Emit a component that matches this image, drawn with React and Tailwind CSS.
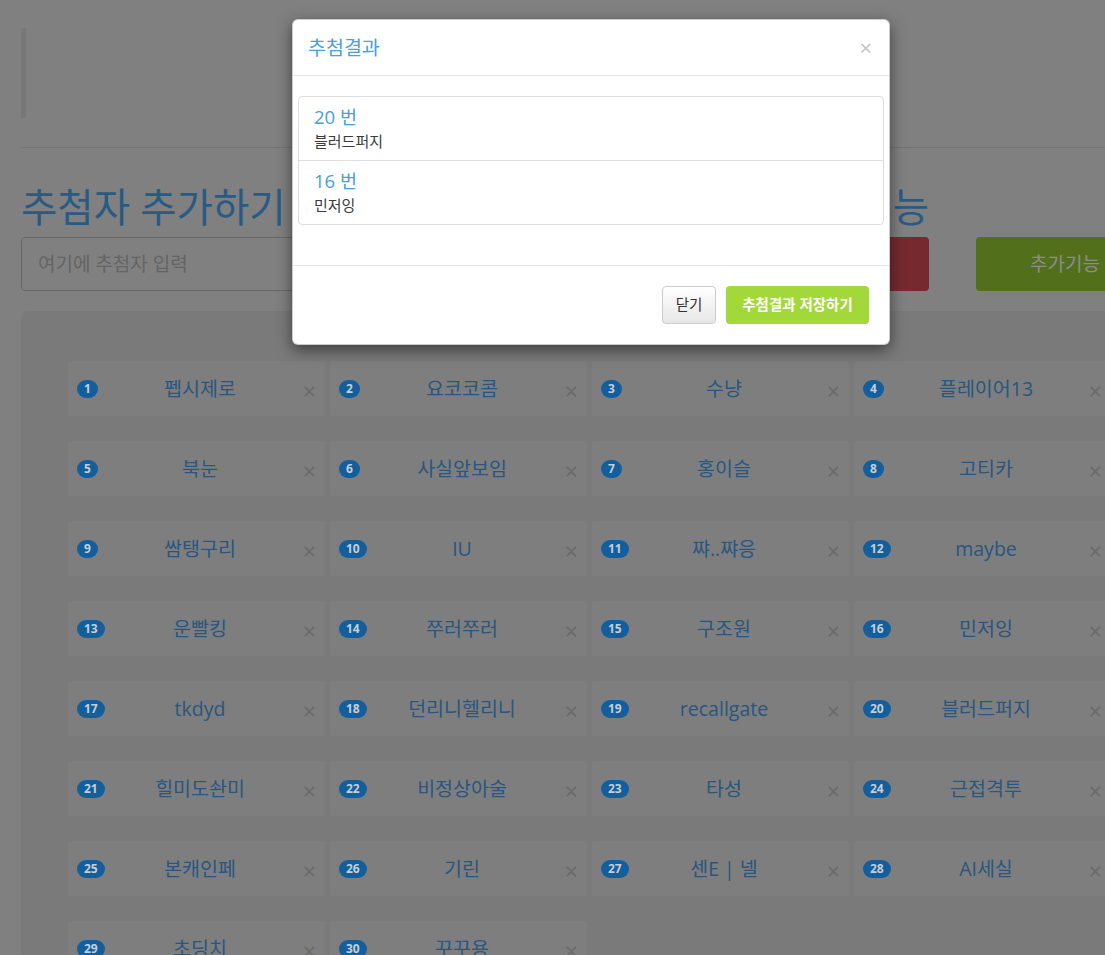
import React from 'react';

const members = [
  '펩시제로', '요코코콤', '수냥', '플레이어13',
  '북눈', '사실앞보임', '홍이슬', '고티카',
  '쌈탱구리', 'IU', '쨔..쨔응', 'maybe',
  '운빨킹', '쭈러쭈러', '구조원', '민저잉',
  'tkdyd', '던리니헬리니', 'recallgate', '블러드퍼지',
  '힐미도솬미', '비정상아술', '타성', '근접격투',
  '본캐인페', '기린', '센E | 넬', 'AI세실',
  '초딩치', '꾸꾸용',
];

const winners = [
  { no: 20, name: '블러드퍼지' },
  { no: 16, name: '민저잉' },
];

function MemberCard({ no, name }) {
  return (
    <div className="h-[57px] grid grid-cols-[1fr_auto_1fr] items-center px-[9px] bg-[#7e7e7e] border border-[#7a7a7a] rounded-[3px]">
      <span className="justify-self-start h-[18px] px-[7px] rounded-full bg-[#135e9d] text-[#c6ced6] text-[12px] font-bold leading-[18px]">
        {no}
      </span>
      <span className="pl-[7px] text-[19.5px] text-[#285680] leading-[26px] whitespace-nowrap">{name}</span>
      <span className="justify-self-end mr-0 mt-[6px] text-[23px] leading-none text-[#6a6a6a]">×</span>
    </div>
  );
}

function ResultModal() {
  return (
    <div className="absolute left-[292px] top-[19px] w-[598px] bg-white rounded-[6px] shadow-[0_5px_15px_rgba(0,0,0,0.5)] border border-black/20">
      <div className="h-[56px] flex items-center justify-between px-[15px] border-b border-[#e5e5e5]">
        <h4 className="text-[19.5px] text-[#48a0dc] leading-[26px]">추첨결과</h4>
        <button className="text-[22px] leading-none text-[#c4c4c4] -mt-[2px] mr-[2px]">×</button>
      </div>
      <div className="pt-[20px] pb-[40px] px-[5px]">
        <div className="border border-[#dddddd] rounded-[4px]">
          {winners.map((w, i) => (
            <div key={w.no} className={'px-[15px] pt-[10px] pb-[10px] ' + (i > 0 ? 'border-t border-[#dddddd]' : '')}>
              <h4 className="text-[18.5px] leading-[20px] text-[#48a0dc] mb-[5px]">{w.no} 번</h4>
              <p className="text-[15px] leading-[18px] text-[#3a3a3a]">{w.name}</p>
            </div>
          ))}
        </div>
      </div>
      <div className="border-t border-[#e5e5e5] px-[20px] py-[20px] flex justify-end gap-[10px]">
        <button className="h-[38px] w-[54px] rounded-[4px] border border-[#cccccc] bg-gradient-to-b from-white to-[#e6e6e6] text-[14.5px] text-[#333]">
          닫기
        </button>
        <button className="h-[38px] w-[143px] rounded-[4px] bg-[#a3d83a] text-[14.5px] font-bold text-white">
          추첨결과 저장하기
        </button>
      </div>
    </div>
  );
}

export default function App() {
  return (
    <div className="relative w-full h-[955px] overflow-hidden bg-[#808080] font-['Open_Sans','Noto_Sans_CJK_KR',sans-serif]">
      <div className="w-[1180px] pl-[21px] pt-[28px]">
        <div className="h-[90px] border-l-[5px] border-[#787878]"></div>
        <hr className="mt-[29px] border-0 border-t border-[#767676]" />

        <div className="mt-[38px] flex h-[42px] items-center">
          <h1 className="w-[540px] text-[39.5px] leading-[42px] text-[#285b84] whitespace-nowrap">추첨자 추가하기</h1>
          <h1 className="ml-[39px] w-[329px] text-right text-[39.5px] leading-[42px] text-[#285b84] whitespace-nowrap">추첨하기 기능</h1>
        </div>

        <div className="mt-[9px] flex h-[54px]">
          <input
            className="w-[540px] h-full rounded-[4px] border border-[#686868] bg-transparent px-[16px] text-[19px] placeholder:text-[#646464] outline-none"
            placeholder="여기에 추첨자 입력"
          />
          <button className="ml-[39px] w-[329px] h-full rounded-[4px] bg-[#762a30] text-[19px] text-[#8c8c8c]">추첨하기</button>
          <button className="ml-[47px] w-[200px] h-full rounded-[4px] bg-[#52701c] text-[19px] text-[#8d8d8d] pr-[22px]">추가기능</button>
        </div>

        <div className="mt-[20px] rounded-tl-[6px] bg-[#7a7a7a] pl-[46px] pt-[49px] pb-[40px]">
          <div className="grid grid-cols-[repeat(4,259px)] gap-x-[3px] gap-y-[23px]">
            {members.map((m, i) => (
              <MemberCard key={i} no={i + 1} name={m} />
            ))}
          </div>
        </div>
      </div>

      <ResultModal />
    </div>
  );
}
